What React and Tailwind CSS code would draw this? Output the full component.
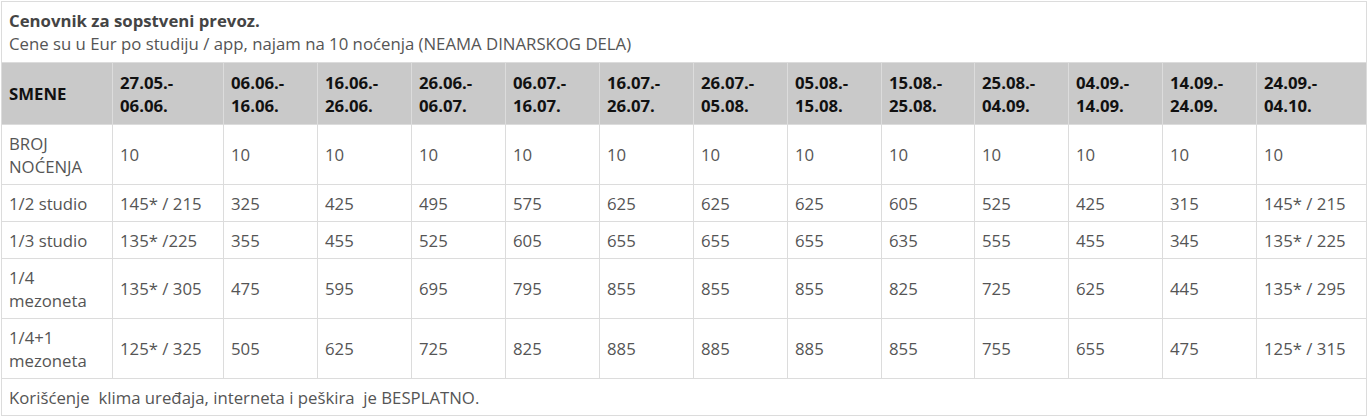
const periods = [
  ['27.05.-', '06.06.'],
  ['06.06.-', '16.06.'],
  ['16.06.-', '26.06.'],
  ['26.06.-', '06.07.'],
  ['06.07.-', '16.07.'],
  ['16.07.-', '26.07.'],
  ['26.07.-', '05.08.'],
  ['05.08.-', '15.08.'],
  ['15.08.-', '25.08.'],
  ['25.08.-', '04.09.'],
  ['04.09.-', '14.09.'],
  ['14.09.-', '24.09.'],
  ['24.09.-', '04.10.'],
]

const rows = [
  { label: ['BROJ', 'NOĆENJA'], values: ['10', '10', '10', '10', '10', '10', '10', '10', '10', '10', '10', '10', '10'] },
  { label: ['1/2 studio'], values: ['145* / 215', '325', '425', '495', '575', '625', '625', '625', '605', '525', '425', '315', '145* / 215'] },
  { label: ['1/3 studio'], values: ['135* /225', '355', '455', '525', '605', '655', '655', '655', '635', '555', '455', '345', '135* / 225'] },
  { label: ['1/4', 'mezoneta'], values: ['135* / 305', '475', '595', '695', '795', '855', '855', '855', '825', '725', '625', '445', '135* / 295'] },
  { label: ['1/4+1', 'mezoneta'], values: ['125* / 325', '505', '625', '725', '825', '885', '885', '885', '855', '755', '655', '475', '125* / 315'] },
]

const widths = [111, 111, 94, 94, 94, 94, 94, 94, 94, 93, 94, 94, 94, 110]

function App() {
  return (
    <div className="bg-white min-h-screen pl-px pt-px font-['Open_Sans',sans-serif] text-[16.75px] leading-[23px] text-[#555]">
      <table className="table-fixed border-collapse w-[1365px] border border-[#dcdcdc]">
        <colgroup>
          {widths.map((w, i) => (
            <col key={i} style={{ width: w }} />
          ))}
        </colgroup>
        <tbody>
          <tr>
            <td colSpan={14} className="border border-[#dcdcdc] px-[7px] py-[7px] align-middle">
              <div className="font-bold text-[#444]">Cenovnik za sopstveni prevoz.</div>
              <div>Cene su u Eur po studiju / app, najam na 10 noćenja (NEAMA DINARSKOG DELA)</div>
            </td>
          </tr>
          <tr className="bg-[#c9c9c9]">
            <td className="border border-[#dcdcdc] px-[7px] py-[7.5px] font-bold text-[#111] align-middle">SMENE</td>
            {periods.map((p, i) => (
              <td key={i} className="border border-[#dcdcdc] px-[7px] py-[7.5px] font-bold text-[#111] align-middle whitespace-nowrap">
                {p[0]}
                <br />
                {p[1]}
              </td>
            ))}
          </tr>
          {rows.map((r, ri) => (
            <tr key={ri}>
              <td className="border border-[#dcdcdc] px-[7px] py-[6.5px] align-middle whitespace-nowrap">
                {r.label.map((l, li) => (
                  <div key={li}>{l}</div>
                ))}
              </td>
              {r.values.map((v, vi) => (
                <td key={vi} className="border border-[#dcdcdc] px-[7px] py-[6.5px] align-middle whitespace-nowrap">
                  {v}
                </td>
              ))}
            </tr>
          ))}
          <tr>
            <td colSpan={14} className="border border-[#dcdcdc] px-[7px] py-[6.5px] align-middle whitespace-pre">
              {'Korišćenje  klima uređaja, interneta i peškira  je BESPLATNO.'}
            </td>
          </tr>
        </tbody>
      </table>
    </div>
  )
}

export default App
